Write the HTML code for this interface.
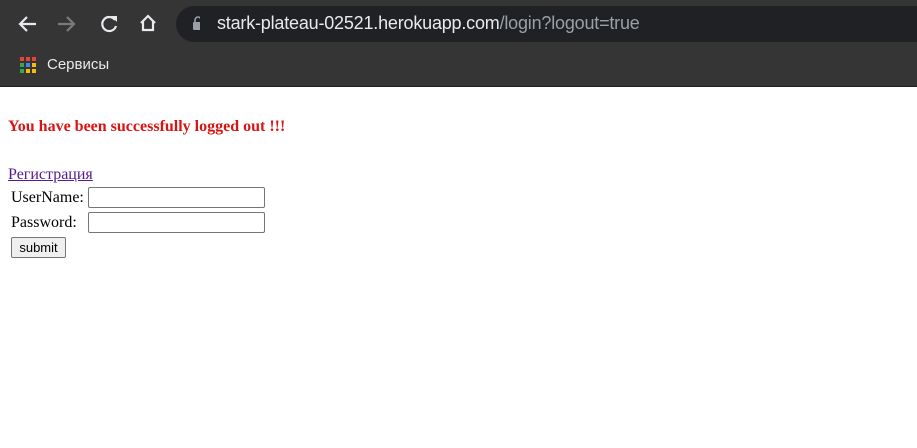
<!DOCTYPE html>
<html><head><style>
*{margin:0;padding:0;box-sizing:border-box}
body{width:917px;height:448px;background:#fff;position:relative;overflow:hidden;font-family:"Liberation Serif",serif}
#top{position:absolute;left:0;top:0;width:917px;height:48px;background:#353535}
#bm{position:absolute;left:0;top:48px;width:917px;height:39px;background:#353535;border-bottom:1px solid #202020}
#bar{position:absolute;left:176px;top:6px;width:760px;height:36px;background:#202124;border-radius:18px}
.u{position:absolute;left:217px;top:13px;font:18px "Liberation Sans",sans-serif;color:#e8eaed;white-space:nowrap;letter-spacing:-0.2px}
.u span{color:#9aa0a6}
.s{position:absolute;left:47px;top:56px;font:15px "Liberation Sans",sans-serif;color:#e8eaed}
.t{position:absolute;font-size:16px;color:#000;white-space:nowrap}
.inp{position:absolute;left:88px;width:177px;height:21px;border:1px solid #767676;border-radius:2px;background:#fff}
</style></head><body>
<div id="top"></div><div id="bm"></div><div id="bar"></div>
<svg style="position:absolute;left:0;top:0" width="200" height="48">
<g fill="none" stroke-width="2.2">
<path d="M36 24H20M27 17l-7 7 7 7" stroke="#e8eaed"/>
<path d="M58 24h16M67 17l7 7-7 7" stroke="#7a7b7d"/>
<path d="M115 20a7 7 0 1 0 1 6" stroke="#e8eaed"/>
<path d="M141 23l7-7 7 7M143 21v9h10v-9" stroke="#e8eaed"/>
</g>
<path d="M111 16h6v6z" fill="#e8eaed"/>
<rect x="193" y="22" width="10" height="8" rx="1" fill="#9aa0a6"/>
<path d="M195 22v-2a3 3 0 0 1 6 0v2" fill="none" stroke="#9aa0a6" stroke-width="1.6"/>
</svg>
<svg style="position:absolute;left:20px;top:57px" width="16" height="16">
<rect x="0" y="0" width="4" height="4" fill="#ea4335"/><rect x="6" y="0" width="4" height="4" fill="#ea4335"/><rect x="12" y="0" width="4" height="4" fill="#ea4335"/>
<rect x="0" y="6" width="4" height="4" fill="#34a853"/><rect x="6" y="6" width="4" height="4" fill="#4285f4"/><rect x="12" y="6" width="4" height="4" fill="#fbbc05"/>
<rect x="0" y="12" width="4" height="4" fill="#34a853"/><rect x="6" y="12" width="4" height="4" fill="#fbbc05"/><rect x="12" y="12" width="4" height="4" fill="#fbbc05"/>
</svg>
<div class="u">stark-plateau-02521.herokuapp.com<span>/login?logout=true</span></div>
<div class="s">Сервисы</div>
<div class="t" style="left:8px;top:118px;color:#d81515;font-weight:bold;font-size:16px">You have been successfully logged out !!!</div>
<div class="t" style="left:8px;top:166px;color:#551a8b;text-decoration:underline">Регистрация</div>
<div class="t" style="left:11px;top:189px">UserName:</div>
<div class="inp" style="top:187px"></div>
<div class="t" style="left:11px;top:214px">Password:</div>
<div class="inp" style="top:212px"></div>
<div style="position:absolute;left:11px;top:237px;width:55px;height:21px;border:1px solid #767676;border-radius:2px;background:#efefef;font:13px 'Liberation Sans',sans-serif;text-align:center;line-height:19px">submit</div>
</body></html>
